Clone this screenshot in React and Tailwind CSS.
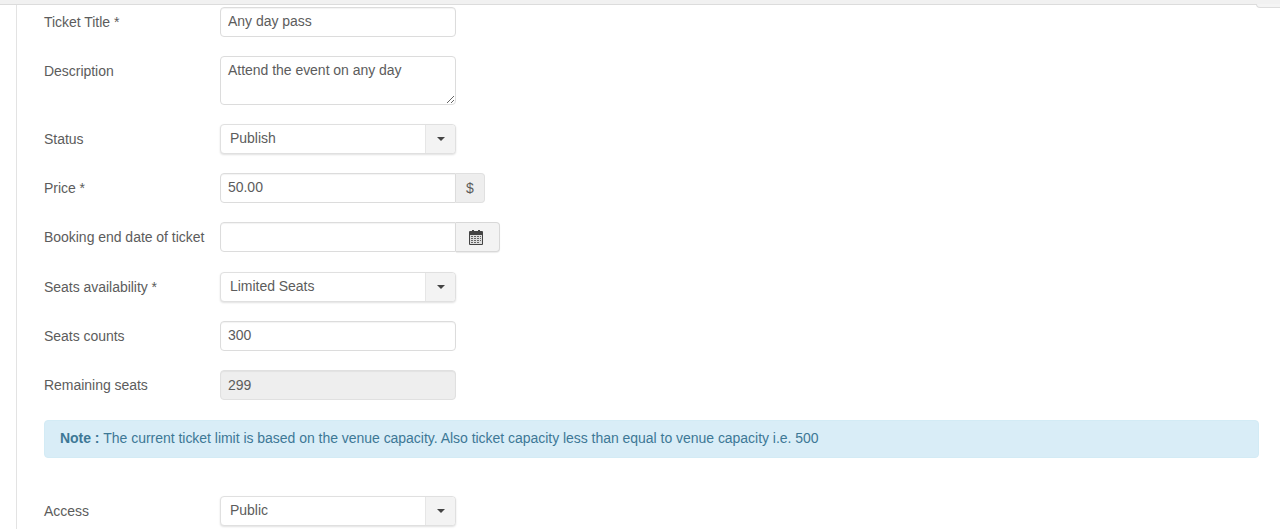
const inputClass =
  "h-full w-[236px] rounded-[4px] border border-[#dcdcdc] bg-white px-[7px] pb-[2px] text-[14px] text-[#5c5c5c] shadow-[inset_0_1px_1px_rgba(0,0,0,0.05)] outline-none";

const Row = ({ label, height = "h-[30px]", className = "", labelClass = "", children }) => (
  <div className={`flex items-center ${height} ${className}`}>
    <label className={`w-[176px] shrink-0 text-[14px] text-[#5c5c5c] ${labelClass}`}>{label}</label>
    {children}
  </div>
);

const Select = ({ value }) => (
  <div className="flex h-full w-[236px] rounded-[4px] border border-[#e0e0e0] bg-white shadow-[0_1px_2px_rgba(0,0,0,0.12)]">
    <span className="flex-1 pl-[9px] text-[14px] leading-[26px] text-[#5c5c5c]">{value}</span>
    <span className="flex w-[30px] items-center justify-center rounded-r-[4px] border-l border-[#e6e6e6] bg-[#f3f3f3]">
      <span className="h-0 w-0 border-x-[4px] border-t-[4px] border-x-transparent border-t-[#444]" />
    </span>
  </div>
);

const CalendarIcon = () => (
  <svg width="14" height="15" viewBox="0 0 14 15">
    <rect x="0" y="1" width="14" height="14" rx="1" fill="#444" />
    <rect x="3" y="0" width="2" height="2" fill="#444" />
    <rect x="9" y="0" width="2" height="2" fill="#444" />
    <rect x="1" y="5" width="12" height="9" fill="#dedede" />
    <path
      d="M2 6h2v1H2zM5 6h2v1H5zM8 6h2v1H8zM11 6h1v1h-1zM2 8h2v1H2zM5 8h2v1H5zM8 8h2v1H8zM11 8h1v1h-1zM2 10h2v1H2zM5 10h2v1H5zM8 10h2v1H8zM11 10h1v1h-1zM2 12h2v1H2zM5 12h2v1H5zM8 12h2v1H8z"
      fill="#666"
    />
  </svg>
);

export default function App() {
  return (
    <div className="relative flex h-[529px] w-[1280px] flex-col overflow-hidden bg-white font-['Liberation_Sans',Arial,sans-serif] tracking-[-0.03px]">
      <div className="h-[5px] shrink-0 border-b border-[#dcdcdc] bg-[#f1f1f1]" />
      <div className="absolute right-0 top-[4px] h-[4px] w-[24px] rounded-bl-[4px] border-b border-l border-[#dcdcdc] bg-[#f4f4f4]" />

      <div className="ml-4 flex-1 border-l border-[#e3e3e3] pl-[27px] pr-[21px] pt-[2px]">
        <Row label="Ticket Title *">
          <input readOnly value="Any day pass" className={inputClass} />
        </Row>

        <Row label="Description" height="h-[49px]" className="mt-[19px] !items-start" labelClass="pt-[5px]">
          <textarea
            readOnly
            value="Attend the event on any day"
            className="h-[49px] w-[236px] resize-y rounded-[4px] border border-[#dcdcdc] bg-white px-[7px] py-[3px] text-[14px] leading-[20px] text-[#5c5c5c] outline-none"
          />
        </Row>

        <Row label="Status" className="mt-[19px]">
          <Select value="Publish" />
        </Row>

        <Row label="Price *" className="mt-[19px]">
          <div className="flex h-full">
            <input readOnly value="50.00" className={`${inputClass} !rounded-r-none`} />
            <span className="flex w-[29px] items-center justify-center rounded-r-[4px] border border-l-0 border-[#e0e0e0] bg-[#eeeeee] text-[14px] text-[#5c5c5c]">
              $
            </span>
          </div>
        </Row>

        <Row label="Booking end date of ticket" className="mt-[19px]">
          <div className="flex h-full">
            <input readOnly value="" className={`${inputClass} !rounded-r-none`} />
            <span className="flex w-[44px] items-center justify-center rounded-r-[4px] border border-l-0 border-[#d8d8d8] bg-[#f3f3f3] pr-[3px] shadow-[0_1px_1px_rgba(0,0,0,0.08)]">
              <CalendarIcon />
            </span>
          </div>
        </Row>

        <Row label="Seats availability *" className="mt-[20px]">
          <Select value="Limited Seats" />
        </Row>

        <Row label="Seats counts" className="mt-[19px]">
          <input readOnly value="300" className={inputClass} />
        </Row>

        <Row label="Remaining seats" className="mt-[19px]">
          <input
            readOnly
            value="299"
            className="h-full w-[236px] rounded-[4px] border border-[#e0e0e0] bg-[#eeeeee] px-[7px] text-[14px] text-[#5c5c5c] shadow-[inset_0_1px_1px_rgba(0,0,0,0.05)] outline-none"
          />
        </Row>

        <div className="mt-[20px] h-[38px] rounded-[4px] border border-[#d3ebf5] bg-[#d9edf7] pl-[15px] text-[14px] leading-[34px] text-[#3d7896]">
          <strong>Note : </strong>The current ticket limit is based on the venue capacity. Also ticket capacity less than equal to venue capacity i.e. 500
        </div>

        <Row label="Access" className="mt-[38px]">
          <Select value="Public" />
        </Row>
      </div>
    </div>
  );
}
